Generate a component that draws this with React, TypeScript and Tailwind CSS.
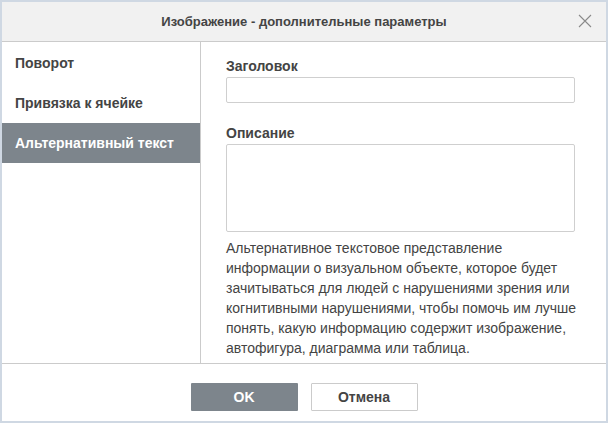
import { useState } from "react";

const tabs = ["Поворот", "Привязка к ячейке", "Альтернативный текст"];

function App() {
  const [active, setActive] = useState(2);
  const [title, setTitle] = useState("");
  const [descr, setDescr] = useState("");

  return (
    <div
      className="w-[608px] h-[423px] bg-[#cfd8e3] p-[2px] text-[#444] font-['Liberation_Sans',Arial,sans-serif]"
    >
      <div className="w-[604px] h-[419px] bg-white flex flex-col">
        <div className="h-[40px] shrink-0 bg-[#f1f1f1] border-b border-[#cbcbcb] flex items-center justify-center relative">
          <h1 className="text-[13px] font-bold text-[#444]">
            Изображение - дополнительные параметры
          </h1>
          <button className="absolute right-[14px] top-[12px] w-[14px] h-[14px]">
            <svg width="14" height="14" viewBox="0 0 14 14">
              <path d="M1 1 L13 13 M13 1 L1 13" stroke="#8a8a8a" strokeWidth="1.1" />
            </svg>
          </button>
        </div>

        <div className="flex flex-1 min-h-0">
          <div className="w-[199px] shrink-0 border-r border-[#cbcbcb] pt-[1px]">
            {tabs.map((t, i) => (
              <div
                key={t}
                onClick={() => setActive(i)}
                className={
                  i === active
                    ? "h-10 flex items-center px-[13px] text-[14px] font-bold bg-[#7d858c] text-white cursor-pointer"
                    : "h-10 flex items-center px-[13px] text-[14px] font-bold text-[#444] cursor-pointer"
                }
              >
                {t}
              </div>
            ))}
          </div>

          <div className="flex-1 pl-[25px] pt-[16px]">
            <label className="block text-[14px] leading-[16px] font-bold mb-[3px]">
              Заголовок
            </label>
            <input
              value={title}
              onChange={(e) => setTitle(e.target.value)}
              className="block w-[349px] h-[26px] border border-[#cfcfcf] rounded-[2px] px-2 text-[14px] outline-none"
            />
            <label className="block text-[14px] leading-[16px] font-bold mt-[22px] mb-[3px]">
              Описание
            </label>
            <textarea
              value={descr}
              onChange={(e) => setDescr(e.target.value)}
              className="block w-[349px] h-[88px] border border-[#cfcfcf] rounded-[2px] px-2 py-1 text-[14px] outline-none resize-none"
            />
            <p className="w-[356px] mt-[6px] text-[14px] leading-[20px] text-[#444]">
              Альтернативное текстовое представление информации о визуальном
              объекте, которое будет зачитываться для людей с нарушениями
              зрения или когнитивными нарушениями, чтобы помочь им лучше понять,
              какую информацию содержит изображение, автофигура, диаграмма или
              таблица.
            </p>
          </div>
        </div>

        <div className="h-[58px] shrink-0 border-t border-[#cbcbcb] flex justify-center gap-[13px] pt-[19px]">
          <button className="w-[107px] h-[28px] bg-[#7d858c] text-white text-[14px] font-bold rounded-[1px]">
            OK
          </button>
          <button className="w-[107px] h-[28px] bg-white border border-[#cbcbcb] text-[#444] text-[14px] font-bold rounded-[1px]">
            Отмена
          </button>
        </div>
      </div>
    </div>
  );
}

export default App;
